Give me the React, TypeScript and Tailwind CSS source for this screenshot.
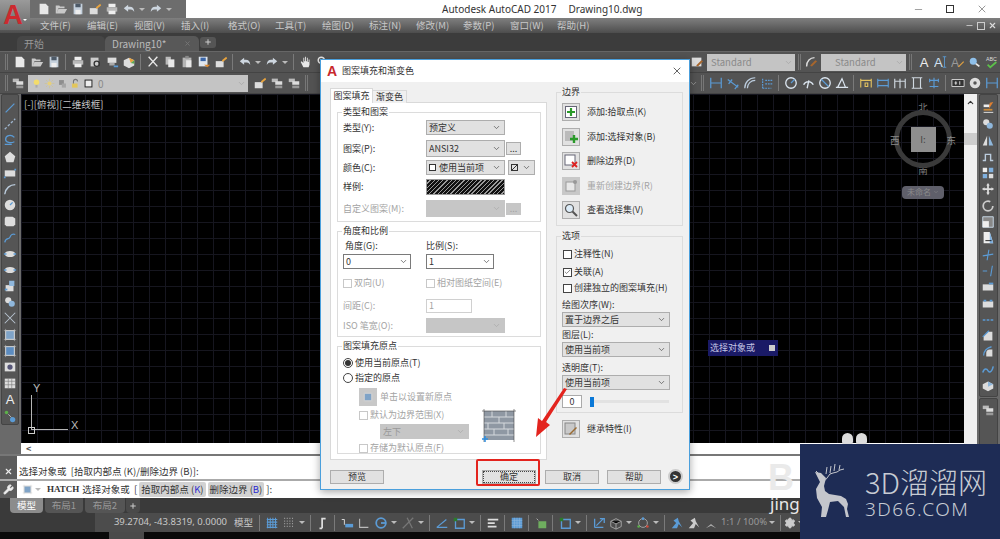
import type { ReactNode } from "react";
import { ChevronDown, Check, Minus, X, Plus, Settings, Wrench } from "lucide-react";

const W = "#e8e8e8";
const B = "#5b9bd5";
const L = "#9fb6cf";

// 16x16 toolbar drawings, named after the AutoCAD command they stand for
const G: Record<string, ReactNode> = {
  newf: <path d="M3 2h7l3 3v9H3z" fill={W} />,
  open: <path d="M2 4h4l1 1h5v2H5l-2 6H2zM5 8h10l-3 5H3z" fill="#c9c9c9" />,
  save: <g><path d="M3 2h10v12H3z" fill="#c4d0dc" /><path d="M5 2h6v4H5z" fill="#4d5a68" /><path d="M5 9h6v5H5z" fill="#eee" /></g>,
  print: <g><path d="M4 2h8v4H4z" fill="#eee" /><path d="M2 6h12v5H2z" fill="#b9b9b9" /><path d="M4 10h8v4H4z" fill="#eee" /></g>,
  preview: <g><path d="M3 3h9v10H3z" fill="#ccc" /><circle cx="10" cy="10" r="3" fill="none" stroke="#333" strokeWidth="1.5" /></g>,
  plot: <g><path d="M3 3h10v6H3z" fill="#ddd" /><path d="M5 9h6v3H5z" fill="#aaa" /><path d="M10 13h5" stroke={B} strokeWidth="2" /></g>,
  cube: <g><path d="M2 6l6-3 6 3v6l-6 3-6-3z" fill="#ddd" /><path d="M8 3l6 3-4 3z" fill="#e8a33d" /><path d="M10 9l4-3v4z" fill="#5aa84f" /></g>,
  cut: <path d="M3 2l10 11M13 2L3 13" stroke={W} strokeWidth="1.6" fill="none" />,
  copy: <g><path d="M3 2h6v9H3z" fill="#bbb" /><path d="M6 5h7v9H6z" fill={W} /></g>,
  paste: <g><path d="M3 3h10v11H3z" fill="#b5b5b5" /><path d="M7 6h6v8H7z" fill={W} /><path d="M6 1h4v3H6z" fill="#888" /></g>,
  blockw: <g><path d="M2 2h10v11H2z" fill="#dfe6ee" /><path d="M4 3h6v4H4z" fill="#3b66a8" /><path d="M8 11h7l-3 3z" fill="#e08a2e" /></g>,
  match: <g><path d="M2 7h9v7H2z" fill="#ddd" /><path d="M9 6l5-4 1 2-5 4z" fill="#e8a33d" /></g>,
  undo: <path d="M7 3L2 7l5 4V8.500h3c2 0 3 1 4 3 0-4-2-6-5-6H7z" fill="#cdd6df" />,
  redo: <path d="M9 3l5 4-5 4V8.500H6c-2 0-3 1-4 3 0-4 2-6 5-6h2z" fill="#cdd6df" />,
  hand: <path d="M5 14L2 8l1-1 2 2V3h1v4h1V2h1v5h1V3h1v5h1V5h1v6l-1 3z" fill={W} />,
  zoom: <g><circle cx="6" cy="6" r="3.500" fill="none" stroke={W} strokeWidth="1.600" /><path d="M8.500 8.500l5 5" stroke={W} strokeWidth="2" /></g>,
  layer: <g><path d="M2 3h7v4H2z" fill="#bbb" /><path d="M6 6h8v4H6z" fill="#ddd" /><path d="M6 11h8v3H6z" fill="#999" /></g>,
  bulb: <g><circle cx="8" cy="6" r="4" fill="#f3dc6b" /><path d="M6.500 10h3v4h-3z" fill="#aaa" /></g>,
  sun: <g><circle cx="8" cy="8" r="3" fill="#e6cf7b" /><path d="M8 1v3M8 12v3M1 8h3M12 8h3M3 3l2 2M11 11l2 2M13 3l-2 2M5 11l-2 2" stroke="#cfc38c" /></g>,
  frozen: <g><path d="M3 3h7v7H3z" fill="#8d8d8d" /><path d="M7 8h6v6H7z" fill="#a5a5a5" /></g>,
  lock: <g><path d="M3 8h8v6H3z" fill="#e3c65a" /><path d="M5 8V5a3 3 0 0 1 6 0" fill="none" stroke="#777" strokeWidth="1.500" /></g>,
  sq: <rect x="3" y="3" width="10" height="10" fill="#eee" stroke="#222" strokeWidth="1.400" />,
  style: <g><path d="M2 3h11v10H2z" fill="#ddd" /><path d="M7 12l6-6 2 1-6 6z" fill="#a8662c" /></g>,
  dimstyle: <g><path d="M3 13C3 7 7 3 12 3" fill="none" stroke="#ddd" strokeWidth="1.600" /><path d="M7 12l6-6 2 1-6 6z" fill="#a8662c" /></g>,
  textA: <text x="3" y="14" fontSize="15" fill="#eee" fontFamily="Liberation Sans">A</text>,
  textAI: <g><text x="0" y="14" fontSize="15" fill="#cfe0f0" fontFamily="Liberation Sans">A</text><path d="M12 2v12M10 2h4M10 14h4" stroke={B} /></g>,
  pen: <g><text x="0" y="14" fontSize="14" fill="#999" fontFamily="Liberation Sans">A</text><path d="M8 13l6-6 1 1-6 6z" fill="#e0a040" /></g>,
  find: <g><circle cx="6" cy="7" r="4" fill="#8fc0ea" /><path d="M9 10l4 3" stroke={W} strokeWidth="2" /></g>,
  abc: <g><text x="1" y="7" fontSize="6" fill="#ddd" fontFamily="Liberation Sans">ABC</text><path d="M3 11l3 3 7-6" stroke="#5cc04a" strokeWidth="2" fill="none" /></g>,
  dimlin: <path d="M2 2v12M14 2v12M2 8h12" stroke={B} strokeWidth="1.400" fill="none" />,
  dimali: <path d="M2 4l12 9M3 9l4-5M10 15l4-5" stroke={B} strokeWidth="1.400" fill="none" />,
  dimarc: <path d="M2 14C2 7 7 2 14 2M5 14C5 9 9 5 14 5" stroke="#bcd" strokeWidth="1.400" fill="none" />,
  dimord: <path d="M3 14h10M3 14V3M6 5h8M6 9h8" stroke={B} strokeWidth="1.400" strokeDasharray="2 1" fill="none" />,
  circ: <g><circle cx="8" cy="8" r="6" fill="none" stroke="#dce6f0" strokeWidth="1.500" /><path d="M8 8l4-4" stroke={B} strokeWidth="1.400" /></g>,
  arc3: <path d="M3 10a6 6 0 0 1 11 0M9 5l-2 9" fill="none" stroke="#dce6f0" strokeWidth="1.500" />,
  circ2: <g><circle cx="8" cy="8" r="6" fill="none" stroke="#dce6f0" strokeWidth="1.500" /><path d="M4 4l8 8" stroke={B} strokeWidth="1.400" /></g>,
  ang: <path d="M1 13h14M3 13l5-10 4 10" fill="none" stroke="#dce6f0" strokeWidth="1.400" />,
  qdim: <path d="M2 3v10M14 3v10M2 5h12M7 8h3v4H7z" stroke="#e0c060" strokeWidth="1.300" fill="none" />,
  base: <path d="M2 3v10M14 3v10M2 5h12M2 11h12" stroke={B} strokeWidth="1.300" fill="none" />,
  cont: <path d="M2 3v11M8 3v11M14 3v11M2 6h12" stroke="#cfd8e0" strokeWidth="1.300" fill="none" />,
  adj: <path d="M2 2h12M2 14h12M4 2v12M12 2v12" stroke="#cfd8e0" strokeWidth="1.300" fill="none" />,
  brk: <path d="M8 2v12M3 3v4M13 3v4M3 5h10M3 12h10" stroke={B} strokeWidth="1.300" fill="none" />,
  tol: <g><path d="M1 4h14v8H1z" fill="#333" stroke="#ddd" /><path d="M4 8h3M5.500 6v4M10 6v4" stroke="#eee" /></g>,
  cen: <g><circle cx="8" cy="8" r="6" fill="#ddd" /><circle cx="8" cy="8" r="2" fill="#555" /></g>,
  pline: <path d="M3 13L13 3" stroke={B} strokeWidth="1.500" />,
  xline: <path d="M2 14L14 2M3 13h.1M13 3h.1" stroke={L} strokeWidth="1.500" strokeDasharray="3 2" />,
  ray: <path d="M13 5C9 1 3 3 3 7s6 5 10 3M2 13h8" stroke={B} strokeWidth="1.500" fill="none" />,
  poly: <path d="M8 2l6 5-2 7H4L2 7z" fill="#ddd" />,
  rect: <g><path d="M2 5h12v7H2z" fill="#ddd" /><path d="M1 13h2M13 4h2" stroke={B} strokeWidth="2" /></g>,
  arc: <path d="M2 14C3 7 8 3 14 3" stroke="#bcd" strokeWidth="1.600" fill="none" />,
  circle: <g><circle cx="8" cy="8" r="6" fill="#ddd" /><path d="M8 8l3-3" stroke={B} strokeWidth="1.500" /></g>,
  cloud: <path d="M3 3h8l3 2v7l-2 2H4l-2-2V5z" fill="#ddd" />,
  spline: <path d="M2 13c1-6 5-3 6-6s3-4 6-3" stroke={B} strokeWidth="1.500" fill="none" />,
  ell: <g><ellipse cx="8" cy="8" rx="6" ry="3.500" fill="#ddd" /><path d="M1 8h3M12 8h3" stroke={B} strokeWidth="1.500" /></g>,
  block: <g><path d="M3 7h9v7H3z" fill="#ddd" /><path d="M7 2h6v6H7z" fill="#8fb7dc" /><path d="M2 12h3" stroke={B} strokeWidth="2" /></g>,
  point: <path d="M2 14L14 2M2 2l12 12" stroke="#b8c4d0" strokeWidth="1.200" />,
  hatch: <g><path d="M3 3h10v10H3z" fill="#7fa3c7" stroke="#ddd" /><path d="M1 3h14M1 13h14M3 1v14M13 1v14" stroke="#ccc" strokeWidth=".6" /></g>,
  grad: <g><path d="M3 3h10v10H3z" fill="#5c8cc0" stroke="#ddd" /><path d="M1 3h14M1 13h14M3 1v14M13 1v14" stroke="#ccc" strokeWidth=".6" /></g>,
  region: <g><path d="M2 3h12v10H2z" fill="#ddd" /><circle cx="8" cy="8" r="3" fill="#557" /></g>,
  table: <g><path d="M2 3h12v11H2z" fill="#ddd" /><path d="M2 6h12M2 10h12M6 3v11M10 3v11" stroke="#777" strokeWidth=".7" /></g>,
  mtext: <text x="3" y="14" fontSize="15" fill="#eee" fontFamily="Liberation Sans">A</text>,
  addsel: <g><circle cx="4" cy="4" r="2" fill="#5cb04a" /><path d="M6 6l4 4" stroke="#bbb" /><circle cx="11" cy="12" r="3" fill={B} /></g>,
  erase: <g><path d="M3 4h7v3H3z" fill="#eee" /><path d="M3 9h10v2H3z" fill="#c8893a" /><path d="M3 13h11" stroke="#eee" /><path d="M10 2l4-1-5 8z" fill="#e08030" /></g>,
  cpy: <g><circle cx="6" cy="6" r="3.500" fill="#ddd" /><circle cx="10" cy="10" r="3.500" fill="#8fb7dc" /></g>,
  mirror: <g><path d="M7 2L2 13h5z" fill="#ddd" /><path d="M9 2l5 11H9z" fill="#8fb7dc" /></g>,
  offset: <path d="M2 12h3V5h6v7h3" fill="none" stroke="#bcd" strokeWidth="1.600" />,
  array: <g><path d="M2 2h5v5H2z" fill="#eee" /><path d="M9 2h5v5H9zM2 9h5v5H2z" fill="#7fb0df" /><path d="M9 9h5v5H9z" fill="#ddd" /></g>,
  move: <path d="M8 1l2 3H9v3h3V6l3 2-3 2V9H9v3h1l-2 3-2-3h1V9H4v1L1 8l3-2v1h3V4H6z" fill="#ddd" />,
  rotate: <circle cx="8" cy="8" r="5.500" fill="none" stroke="#ccc" strokeWidth="2" strokeDasharray="28 6" />,
  scale: <g><path d="M2 2h12v12H2z" fill="#888" stroke="#cfe0f0" /><path d="M2 7h7v7H2z" fill="#eee" /></g>,
  stretch: <g><path d="M3 1h7l4 13H3z" fill="#eee" /><path d="M10 1l4 13h-4z" fill="#7fb0df" /><path d="M5 11h7" stroke="#111" /></g>,
  trim: <path d="M2 9l12-2M9 2L7 14" stroke={B} strokeWidth="1.300" />,
  ext: <path d="M2 8h5M13 2l-2 12" stroke={B} strokeWidth="1.300" />,
  brkp: <g><path d="M2 5h12v7H2z" fill="#ddd" /><path d="M9 4h5" stroke={B} strokeWidth="2" /></g>,
  brk2: <g><path d="M2 5h12v7H2z" fill="#ddd" /><path d="M3 4h3M10 4h3" stroke={B} strokeWidth="2" /></g>,
  join: <path d="M2 8h12" stroke={B} strokeWidth="1.500" strokeDasharray="3 1.500" />,
  chamfer: <g><path d="M3 13V8l5-5h5v10z" fill="#ddd" /><path d="M2 9l7-7" stroke={B} strokeWidth="1.500" /></g>,
  fillet: <g><path d="M6 13V9a4 4 0 0 1 4-4h3v8z" fill="#ddd" /><path d="M3 12C3 7 7 3 12 2" stroke={B} strokeWidth="1.500" fill="none" /></g>,
  blend: <path d="M2 12c2-6 5-4 6-2s4 3 6-5" stroke={B} strokeWidth="1.800" fill="none" />,
  explode: <g><path d="M2 7l6-3 6 3v5l-6 3-6-3z" fill="#ddd" /><path d="M8 4l6 3-6 3z" fill="#8fb7dc" /></g>,
  grid: <path d="M3 2v12M6 2v12M9 2v12M12 2v12M2 4h12M2 7h12M2 10h12M2 13h12" stroke={B} strokeWidth="1.200" />,
  grid2: <path d="M3 2v12M6 2v12M9 2v12M12 2v12" stroke="#999" strokeWidth="1.200" strokeDasharray="1.500 1.500" />,
  note: <path d="M7 14V3h4M4 14h3" stroke="#ddd" strokeWidth="2" fill="none" />,
  ortho: <path d="M3 3v10h10" stroke="#bbb" strokeWidth="1.200" fill="none" />,
  dyn: <g><path d="M2 4h3v6" stroke={W} fill="none" /><path d="M6 9h9v4H6z" fill={B} /></g>,
  polar: <g><circle cx="8" cy="8" r="5.500" fill="none" stroke={B} strokeWidth="2" /><path d="M8 8h6" stroke={B} strokeWidth="2" /></g>,
  iso: <path d="M2 14L14 2M7 2l6 12" stroke="#777" strokeWidth="1.500" />,
  snap: <g><path d="M2 13L13 4M2 13h12" stroke={B} strokeWidth="1.400" /></g>,
  osnap: <g><path d="M4 4h10v10H4z" fill="none" stroke={B} strokeWidth="1.500" /><path d="M2 2h4v4H2z" fill="#2c7a2c" /></g>,
  lw: <path d="M2 4h12M2 8h8M2 12h10" stroke="#ddd" strokeWidth="2" />,
  trans: <g><path d="M2 2h12v12H2z" fill={B} /><path d="M2 5h12M2 8h12M2 11h12M5 2v12M8 2v12M11 2v12" stroke="#8fb7dc" strokeWidth=".7" /></g>,
  sel: <g><path d="M3 3l2 2" stroke="#bbb" /><path d="M5 6h9v8H5z" fill="#6fae5f" /></g>,
  cube3: <g><path d="M2 6l6-3 6 3v6l-6 3-6-3z" fill="none" stroke="#aaa" /><path d="M2 6l6 3 6-3M8 9v6" stroke="#aaa" /></g>,
  ucs: <path d="M3 13V3M3 13h10M5 11l8-8M9 3h5v5" stroke={B} strokeWidth="1.500" fill="none" />,
  gizmo: <g><circle cx="8" cy="8" r="5" fill="none" stroke="#aaa" /><circle cx="3" cy="12" r="1.500" fill="#5cb04a" /><circle cx="13" cy="12" r="1.500" fill="#d04a3a" /><circle cx="8" cy="3" r="1.500" fill={B} /></g>,
  anno: <path d="M2 14l5-6-3-3 5-3 1 4 4 7-4-4-2 5z" fill={B} />,
  anno2: <path d="M2 14l5-6-3-3 5-3 1 4 4 7-4-4-2 5z" fill="#ccc" />,
  anno3: <path d="M8 2v7l6 5-6-3-6 3 6-5z" fill="#aaa" />,
};

function Ic({ n, s = 14 }: { n: string; s?: number }) {
  return (
    <svg width={s} height={s} viewBox="0 0 16 16" className="shrink-0">
      {G[n]}
    </svg>
  );
}

const Caret = () => <span className="mx-[2px] h-0 w-0 border-x-[3px] border-t-[3px] border-x-transparent border-t-[#bbb]" />;
const Sep = () => <span className="mx-[3px] h-[16px] w-px bg-[#7a7a7a]" />;
const Grip = () => <span className="mx-[3px] h-[16px] w-[3px] border-x border-[#777]" />;

function ToolSelect({ text, w, muted }: { text: string; w: string; muted?: boolean }) {
  return (
    <div className={`flex h-[17px] items-center justify-between bg-[#c4c4c4] pl-[4px] pr-[2px] text-[9.500px] text-[#8a8a8a] ${w}`}>
      <span className={muted ? "ml-[10px]" : ""}>{text}</span>
      <ChevronDown size={9} color="#a5a5a5" />
    </div>
  );
}

function DSelect({ text, w, off, h = "h-[15px]" }: { text?: ReactNode; w: string; off?: boolean; h?: string }) {
  return (
    <div className={`flex items-center justify-between border border-[#adadad] pl-[2px] pr-[3px] ${h} ${w} ${off ? "bg-[#c6c6c6] text-[#999] border-[#c6c6c6]" : "bg-[#e1e1e1] text-[#333]"}`}>
      <span className="truncate">{text}</span>
      <ChevronDown size={9} color={off ? "#aaa" : "#555"} />
    </div>
  );
}

function WhiteCombo({ text, w }: { text: string; w: string }) {
  return (
    <div className={`flex h-[15px] items-center justify-between border border-[#7a7a7a] bg-white pl-[2px] pr-[2px] text-[#333] ${w}`}>
      <span>{text}</span>
      <ChevronDown size={9} color="#555" />
    </div>
  );
}

function Cb({ label, on, off }: { label: string; on?: boolean; off?: boolean }) {
  return (
    <div className={`flex items-center gap-[2px] ${off ? "text-[#a3a3a3]" : "text-[#333]"}`}>
      <span className={`flex h-[9px] w-[9px] items-center justify-center border bg-white ${off ? "border-[#c8c8c8]" : "border-[#444]"}`}>
        {on && <Check size={8} color="#333" strokeWidth={2} />}
      </span>
      {label}
    </div>
  );
}

function Radio({ label, on }: { label: string; on?: boolean }) {
  return (
    <div className="flex items-center gap-[2px] text-[#333]">
      <span className="flex h-[10px] w-[10px] items-center justify-center rounded-full border border-[#444] bg-white">
        {on && <span className="h-[6px] w-[6px] rounded-full bg-[#333]" />}
      </span>
      {label}
    </div>
  );
}

function Group({ title, bg, h, children }: { title: string; bg: string; h: string; children: ReactNode }) {
  return (
    <div className={`relative border border-[#dcdcdc] ${h}`}>
      <span className={`absolute -top-[7px] left-[4px] px-[1px] leading-[12px] text-[#333] ${bg}`}>{title}</span>
      {children}
    </div>
  );
}

function SideBtn({ label, off, children }: { label: string; off?: boolean; children: ReactNode }) {
  return (
    <div className={`flex h-[18px] items-center gap-[7px] ${off ? "text-[#a3a3a3]" : "text-[#333]"}`}>
      <span className={`flex h-[18px] w-[18px] items-center justify-center border ${off ? "border-[#c8c8c8] bg-[#c8c8c8]" : "border-[#adadad] bg-[#e1e1e1]"}`}>{children}</span>
      {label}
    </div>
  );
}

function DBtn({ text, cls = "" }: { text: string; cls?: string }) {
  return <div className={`flex h-[14px] w-[54px] items-center justify-center border border-[#adadad] bg-[#e1e1e1] text-[#333] ${cls}`}>{text}</div>;
}

const hatchBg = "bg-[repeating-linear-gradient(135deg,#111_0px,#111_2px,#9a9a9a_2px,#9a9a9a_3px)]";

function HatchDialog() {
  return (
    <div className="absolute left-[320px] top-[59px] z-10 flex h-[431px] w-[370px] flex-col border border-[#4a9fdc] bg-[#f0f0f0] text-[9px] leading-[12px] shadow-[0_2px_8px_rgba(0,0,0,0.35)]">
      <div className="flex h-[22px] shrink-0 items-center bg-white pl-[6px] pr-[6px]">
        <span className="w-[15px] text-[14px] font-bold text-[#c8282d] [font-family:'Liberation_Sans',sans-serif]">A</span>
        <span className="text-[#333]">图案填充和渐变色</span>
        <X size={12} color="#333" className="ml-auto" strokeWidth={1.5} />
      </div>
      <div className="flex pl-[9px] pt-[6px]">
        <div className="w-[217px]">
          <div className="relative z-[1] flex h-[15px] items-end">
            <div className="flex h-[15px] w-[43px] items-center justify-center border border-b-0 border-[#d9d9d9] bg-white text-[#333]">图案填充</div>
            <div className="flex h-[13px] w-[34px] items-center justify-center border border-b-0 border-l-0 border-[#d9d9d9] bg-[#f0f0f0] text-[#333]">渐变色</div>
          </div>
          <div className="-mt-px flex h-[358px] flex-col gap-[9px] border border-[#d9d9d9] bg-white pl-[6px] pr-[5px] pt-[9px]">
            <Group title="类型和图案" bg="bg-white" h="h-[110px]">
              <div className="flex flex-col pl-[5px] pt-[7px]">
                <div className="flex h-[15px] items-center text-[#333]"><span className="w-[83px]">类型(Y):</span><DSelect text="预定义" w="w-[79px]" /></div>
                <div className="mt-[5px] flex h-[17px] items-center text-[#333]"><span className="w-[83px]">图案(P):</span><DSelect text="ANSI32" w="w-[79px]" h="h-[17px]" /><span className="ml-px flex h-[13px] w-[15px] items-center justify-center border border-[#adadad] bg-[#e1e1e1]">...</span></div>
                <div className="mt-[3px] flex h-[15px] items-center text-[#333]">
                  <span className="w-[83px]">颜色(C):</span>
                  <DSelect w="w-[79px]" text={<span className="flex items-center gap-[3px]"><span className="h-[7px] w-[7px] border border-[#333] bg-white" />使用当前项</span>} />
                  <DSelect w="ml-[3px] w-[27px]" text={<span className="block h-[7px] w-[7px] border border-[#333] bg-[linear-gradient(135deg,transparent_45%,#333_45%,#333_55%,transparent_55%)]" />} />
                </div>
                <div className="mt-[4px] flex h-[16px] items-center text-[#333]"><span className="w-[83px]">样例:</span><div className={`h-[16px] w-[79px] border border-[#999] ${hatchBg}`} /></div>
                <div className="mt-[5px] flex h-[17px] items-center text-[#a3a3a3]"><span className="w-[83px]">自定义图案(M):</span><DSelect w="w-[79px]" off h="h-[17px]" /><span className="ml-px flex h-[12px] w-[15px] items-center justify-center bg-[#c6c6c6]">...</span></div>
              </div>
            </Group>
            <Group title="角度和比例" bg="bg-white" h="h-[106px]">
              <div className="flex flex-col pl-[5px] pt-[8px]">
                <div className="flex text-[#333]"><span className="w-[83px] pl-[2px]">角度(G):</span><span>比例(S):</span></div>
                <div className="mt-[2px] flex"><WhiteCombo text="0" w="mr-[15px] w-[68px]" /><WhiteCombo text="1" w="w-[68px]" /></div>
                <div className="mt-[8px] flex"><div className="w-[83px]"><Cb label="双向(U)" off /></div><Cb label="相对图纸空间(E)" off /></div>
                <div className="mt-[9px] flex h-[15px] items-center text-[#a3a3a3]"><span className="w-[83px]">间距(C):</span><span className="flex h-[14px] w-[46px] items-center border border-[#d0d0d0] bg-white pl-[2px]">1</span></div>
                <div className="mt-[5px] flex h-[15px] items-center text-[#a3a3a3]"><span className="w-[83px]">ISO 笔宽(O):</span><DSelect w="w-[79px]" off /></div>
              </div>
            </Group>
            <Group title="图案填充原点" bg="bg-white" h="h-[108px]">
              <div className="flex">
                <div className="flex flex-col pl-[5px] pt-[10px]">
                  <Radio label="使用当前原点(T)" on />
                  <div className="mt-[3px]"><Radio label="指定的原点" /></div>
                  <div className="ml-[16px] mt-[4px] flex items-center gap-[3px] text-[#a3a3a3]">
                    <span className="flex h-[18px] w-[18px] items-center justify-center bg-[#c8c8c8]"><Ic n="hatch" s={12} /></span>单击以设置新原点
                  </div>
                  <div className="ml-[16px] mt-[3px]"><Cb label="默认为边界范围(X)" off /></div>
                  <div className="ml-[37px] mt-[3px]"><DSelect text="左下" w="w-[89px]" off /></div>
                  <div className="ml-[16px] mt-[3px]"><Cb label="存储为默认原点(F)" off /></div>
                </div>
                <svg width="34" height="33" viewBox="0 0 34 33" className="ml-[13px] mt-[62px] shrink-0">
                  <rect x="2" y="2" width="30" height="29" fill="#8f98a3" />
                  <path d="M2 8h30M2 14h30M2 20h30M2 26h30M10 2v6M24 2v6M17 8v6M6 14v6M22 14v6M12 20v6M26 20v6" stroke="#d5d9dd" />
                  <path d="M0 2h34M2 0v33M32 0v33" stroke="#444" strokeWidth=".6" />
                  <path d="M0 30h6M3 27v6" stroke="#2f8fe0" strokeWidth="1.500" />
                </svg>
              </div>
            </Group>
          </div>
        </div>
        <div className="ml-[9px] flex w-[127px] flex-col pt-[4px]">
          <Group title="边界" bg="bg-[#f0f0f0]" h="h-[134px]">
            <div className="flex flex-col gap-[6.500px] pl-[5px] pt-[10px]">
              <SideBtn label="添加:拾取点(K)"><svg width="12" height="12" viewBox="0 0 12 12"><rect x=".5" y=".5" width="11" height="11" fill="#fff" stroke="#667" /><path d="M6 2v8M2 6h8" stroke="#2a9a2a" strokeWidth="2.200" /></svg></SideBtn>
              <SideBtn label="添加:选择对象(B)"><svg width="14" height="14" viewBox="0 0 14 14"><rect x="1" y="1" width="9" height="10" fill="#bbb" /><path d="M10 5v8M6 9h8" stroke="#2a9a2a" strokeWidth="2.400" /></svg></SideBtn>
              <SideBtn label="删除边界(D)"><svg width="14" height="14" viewBox="0 0 14 14"><rect x="1" y="1" width="10" height="10" fill="#fff" stroke="#667" /><path d="M8 8l5 5M13 8l-5 5" stroke="#d22" strokeWidth="1.800" /></svg></SideBtn>
              <SideBtn label="重新创建边界(R)" off><svg width="14" height="14" viewBox="0 0 14 14"><rect x="2" y="3" width="9" height="9" fill="#e8e8e8" stroke="#999" /><circle cx="11" cy="3" r="2" fill="#999" /></svg></SideBtn>
              <SideBtn label="查看选择集(V)"><svg width="14" height="14" viewBox="0 0 14 14"><circle cx="5.500" cy="5.500" r="4" fill="#dcecf8" stroke="#555" strokeWidth="1.200" /><path d="M8.500 8.500l4.500 4.500" stroke="#555" strokeWidth="2" /></svg></SideBtn>
            </div>
          </Group>
          <div className="mt-[10px]">
            <Group title="选项" bg="bg-[#f0f0f0]" h="h-[177px]">
              <div className="flex flex-col pl-[6px] pt-[11px]">
                <Cb label="注释性(N)" />
                <div className="mt-[6px]"><Cb label="关联(A)" on /></div>
                <div className="mt-[4px]"><Cb label="创建独立的图案填充(H)" /></div>
                <span className="-ml-px mt-[5px] text-[#333]">绘图次序(W):</span>
                <DSelect text="置于边界之后" w="-ml-px mt-[1px] w-[108px]" />
                <span className="-ml-px mt-[2px] text-[#333]">图层(L):</span>
                <DSelect text="使用当前项" w="-ml-px mt-[1px] w-[108px]" />
                <span className="-ml-px mt-[5px] text-[#333]">透明度(T):</span>
                <DSelect text="使用当前项" w="-ml-px mt-[1px] w-[108px]" />
                <div className="-ml-px mt-[5px] flex items-center">
                  <span className="flex h-[13px] w-[20px] items-center justify-center border border-[#aaa] bg-white text-[#333]">0</span>
                  <div className="ml-[8px] flex h-[3px] w-[79px] items-center bg-[#e2e2e2]"><span className="h-[10px] w-[4px] bg-[#0a78d7]" /></div>
                </div>
              </div>
            </Group>
          </div>
          <div className="ml-[6px] mt-[7px]">
            <SideBtn label="继承特性(I)"><svg width="14" height="14" viewBox="0 0 14 14"><rect x="1" y="1" width="10" height="11" fill="#c9c9c9" stroke="#888" /><path d="M5 12l7-7 1 1-7 7z" fill="#9a6a30" /></svg></SideBtn>
          </div>
        </div>
      </div>
      <div className="ml-[9px] mt-[9px] flex items-center">
        <DBtn text="预览" />
        <DBtn text="确定" cls="ml-[98px] border-[#0078d7] outline-1 -outline-offset-2 outline-dotted outline-[#444]" />
        <DBtn text="取消" cls="ml-[9px]" />
        <DBtn text="帮助" cls="ml-[8px]" />
        <span className="ml-[7px] flex h-[15px] w-[15px] items-center justify-center rounded-full border-2 border-[#ccc] bg-[#333] text-[9px] font-bold text-white [font-family:'Liberation_Sans',sans-serif]">&gt;</span>
      </div>
    </div>
  );
}

const topIcons = ["newf", "open", "save", "|", "print", "preview", "plot", "cube", "|", "cut", "copy", "paste", "blockw", "match", "|", "undo", "^", "redo", "^", "|", "hand", "zoom"];
const dimIcons = ["dimlin", "dimali", "dimarc", "dimord", "|", "circ", "arc3", "circ2", "ang", "|", "qdim", "base", "cont", "adj", "brk", "|", "tol", "cen", "dimlin"];
const leftTools = ["pline", "xline", "ray", "poly", "rect", "arc", "circle", "cloud", "spline", "ell", "ell", "block", "cpy", "point", "hatch", "grad", "region", "table", "mtext", "addsel"];
const rightTools = ["erase", "cpy", "mirror", "offset", "array", "move", "rotate", "scale", "stretch", "trim", "ext", "brkp", "brk2", "join", "chamfer", "fillet", "blend", "explode"];
const menus = ["文件(F)", "编辑(E)", "视图(V)", "插入(I)", "格式(O)", "工具(T)", "绘图(D)", "标注(N)", "修改(M)", "参数(P)", "窗口(W)", "帮助(H)"];
const statusIcons = ["iso", "^", "|", "snap", "osnap", "^", "|", "lw", "|", "trans", "|", "sel", "|", "osnap", "^", "|", "ucs", "cube3", "^", "gizmo", "^", "|", "anno", "anno2", "anno3"];

function Strip({ items }: { items: string[] }) {
  return (
    <>
      {items.map((n, i) =>
        n === "|" ? <Sep key={i} /> : n === "^" ? <Caret key={i} /> : <span key={i} className="mx-[1.500px]"><Ic n={n} /></span>
      )}
    </>
  );
}

function ViewCube() {
  return (
    <div className="absolute left-[893px] top-[100px] flex w-[60px] flex-col items-center text-[9.500px] text-[#7c7c7c]">
      <span>北</span>
      <div className="relative mt-[-4px] flex h-[58px] w-[58px] items-center justify-center rounded-full border-[5px] border-[#3a3a3a]">
        <div className="flex h-[25px] w-[25px] items-center justify-center bg-[#8e8e8e] text-[#444]">I:</div>
        <span className="absolute -left-[9px] top-[18px] text-[#8a8a8a]">西</span>
        <span className="absolute -right-[9px] top-[18px] text-[#8a8a8a]">东</span>
      </div>
      <span className="mt-[-5px]">南</span>
      <div className="mt-[8px] flex h-[13px] w-[42px] items-center justify-center gap-[2px] rounded-[4px] bg-[#5f5f6a] text-[8px] text-[#8a8a8a]">未命名<ChevronDown size={6} /></div>
    </div>
  );
}

export default function App() {
  return (
    <div className="relative flex h-[539px] w-[1000px] flex-col overflow-hidden bg-black text-[10px] [font-family:'Noto_Sans_CJK_SC','Noto_Sans',sans-serif]">
      {/* title bar */}
      <div className="flex h-[18px] shrink-0 bg-white">
        <div className="z-[2] flex h-[30px] w-[30px] shrink-0 items-center justify-center bg-[linear-gradient(#9a9a9a,#6a6a6a)]">
          <span className="text-[27px] font-bold leading-none text-[#cc2a2f] [font-family:'Liberation_Sans',sans-serif]">A</span>
          <span className="mt-[10px] h-0 w-0 border-x-[2px] border-t-[2px] border-x-transparent border-t-white" />
        </div>
        <div className="flex w-[156px] items-center bg-[#6d6d6d] pl-[5px]">
          <Strip items={["newf", "open", "save", "match", "print", "undo", "^", "redo", "^"]} />
        </div>
        <div className="flex flex-1 items-center pl-[256px] text-[#333] [font-family:'Noto_Sans',sans-serif]">
          <span>Autodesk AutoCAD 2017</span>
          <span className="ml-[12px]">Drawing10.dwg</span>
          <div className="ml-auto mr-[12px] flex items-center gap-[22px]">
            <Minus size={11} strokeWidth={1} color="#333" />
            <span className="h-[8px] w-[8px] border border-[#333]" />
            <X size={12} strokeWidth={1} color="#333" />
          </div>
        </div>
      </div>
      {/* menu bar */}
      <div className="flex h-[15px] shrink-0 items-center bg-[linear-gradient(#7f7f7f,#4d4d4d)] pl-[40px] text-[9.500px] text-[#c8c8c8]">
        {menus.map((m) => <span key={m} className="w-[47px] shrink-0">{m}</span>)}
        <div className="ml-auto mr-[3px] flex items-center gap-[3px] text-[#ddd]">
          <Minus size={9} /><span className="h-[8px] w-[8px] border border-[#ccc]" /><X size={9} strokeWidth={3} />
        </div>
      </div>
      {/* file tabs */}
      <div className="flex h-[18px] shrink-0 items-end bg-[#3c3c3c] pl-[17px] text-[#999]">
        <div className="flex h-[15px] w-[88px] items-center rounded-t-[5px] bg-[#464646] pl-[7px]">开始</div>
        <div className="flex h-[15px] w-[94px] items-center justify-between rounded-t-[5px] bg-[#585858] pl-[7px] pr-[8px] text-[#bbb]">Drawing10*<X size={7} color="#777" strokeWidth={3} /></div>
        <div className="ml-[1px] flex h-[11px] w-[16px] items-center justify-center self-center rounded-[3px] bg-[#555]"><Plus size={8} color="#ccc" strokeWidth={3} /></div>
      </div>
      {/* toolbars */}
      <div className="flex h-[21px] shrink-0 items-center border-t border-[#666] bg-[#535353] pl-[2px]">
        <Grip />
        <Strip items={topIcons} />
        <div className="ml-auto flex items-center">
          <Ic n="style" />
          <span className="w-[3px]" />
          <ToolSelect text="Standard" w="w-[88px]" />
          <Grip />
          <Ic n="dimstyle" />
          <span className="w-[3px]" />
          <ToolSelect text="Standard" w="w-[85px]" muted />
          <Grip />
          <Strip items={["textA", "textAI", "pen", "find", "abc"]} />
        </div>
      </div>
      <div className="flex h-[22px] shrink-0 items-center border-y border-[#444] bg-[#535353] pl-[2px]">
        <Grip />
        <Ic n="layer" />
        <div className="ml-[3px] flex h-[17px] w-[220px] items-center gap-[2px] bg-[#c4c4c4] pl-[3px] pr-[2px] text-[#8a8a8a]">
          <Ic n="bulb" s={11} /><Ic n="sun" s={11} /><Ic n="frozen" s={11} /><Ic n="lock" s={11} /><Ic n="sq" s={11} />
          <span className="ml-[2px]">0</span>
          <ChevronDown size={9} color="#a5a5a5" className="ml-auto" />
        </div>
        <span className="ml-[3px]" />
        <Strip items={["match", "layer", "layer"]} />
        <Grip />
        <div className="ml-auto flex items-center">
          <ChevronDown size={9} color="#a5a5a5" />
          <Grip />
          <Strip items={dimIcons} />
        </div>
      </div>
      {/* middle: tool strips and canvas */}
      <div className="flex min-h-0 flex-1">
        <div className="flex w-[21px] shrink-0 flex-col bg-[#6a6a6a] pl-[1px]">
          <div className="flex h-[331px] w-[18px] flex-col items-center gap-[2.200px] rounded-[2px] border border-[#444] bg-[#555] pt-[6px]">
            {leftTools.map((n, i) => <Ic key={i} n={n} />)}
          </div>
        </div>
        <div className="flex min-w-0 flex-1 flex-col">
          <div className="relative flex-1 bg-black bg-[linear-gradient(#16161f_1px,transparent_1px),linear-gradient(90deg,#16161f_1px,transparent_1px)] bg-[size:16px_16px] pl-[3px] pt-[3px] text-[9.500px] text-[#c4c4c4]">
            [-][俯视][二维线框]
          </div>
          <div className="flex h-[11px] items-center bg-white pl-[5px] text-[9px] font-bold leading-none text-[#555]">&lt;</div>
        </div>
        <div className="flex w-[13px] shrink-0 flex-col items-center bg-[#f0f0f0] pt-[4px]">
          <ChevronDown size={9} color="#333" strokeWidth={3} className="rotate-180" />
          <div className="mt-[26px] h-[12px] w-full bg-[#cdcdcd]" />
          <ChevronDown size={9} color="#333" strokeWidth={3} className="mt-auto mb-[1px]" />
        </div>
        <div className="flex w-[23px] shrink-0 flex-col items-center bg-[#6a6a6a] pr-[1px]">
          <div className="flex w-[19px] flex-col items-center gap-[2.300px] rounded-[2px] border border-[#444] bg-[#555] pb-[4px] pt-[6px]">
            {rightTools.map((n, i) => <Ic key={i} n={n} />)}
          </div>
          <div className="mt-[1px] flex w-[19px] flex-1 justify-center rounded-[2px] border border-[#444] bg-[#555] pt-[4px]"><Ic n="layer" /></div>
        </div>
      </div>
      {/* command line */}
      <div className="flex h-[44px] shrink-0 flex-col border-t-2 border-[#777] bg-white">
        <div className="flex h-[25px] border-b-2 border-[#aaa]">
          <div className="flex w-[17px] shrink-0 flex-col items-center bg-[#5c5c5c] pt-[11px]"><X size={9} color="#eee" strokeWidth={3} /></div>
          <span className="self-end pb-[1px] pl-[2px] text-[9.500px] leading-[13px] text-[#333]">选择对象或 &nbsp;[拾取内部点 (K)/删除边界 (B)]:</span>
        </div>
        <div className="flex h-[17px] items-center">
          <div className="flex h-full w-[17px] shrink-0 items-center justify-center bg-[#5c5c5c]"><Wrench size={11} color="#eee" fill="#eee" /></div>
          <span className="ml-[5px]"><Ic n="hatch" s={11} /></span>
          <Caret />
          <span className="ml-[4px] text-[9px] font-bold text-[#333] [font-family:'Liberation_Serif',serif]">HATCH</span>
          <span className="ml-[3px] text-[9.500px] text-[#333]">选择对象或 &nbsp;[</span>
          <span className="ml-[2px] rounded-[2px] bg-[#d2d2d2] px-[2px] text-[9.500px] text-[#333]">拾取内部点 (<span className="text-[#2a2ad0]">K</span>)</span>
          <span className="ml-[2px] rounded-[2px] bg-[#d2d2d2] px-[2px] text-[9.500px] text-[#333]">删除边界 (<span className="text-[#2a2ad0]">B</span>)</span>
          <span className="ml-[2px] text-[9.500px] text-[#333]">]:</span>
        </div>
      </div>
      {/* layout tabs */}
      <div className="flex h-[15px] shrink-0 items-end bg-[#3a3a3a] pl-[10px] text-[9.500px]">
        <div className="flex h-[15px] w-[33px] items-center justify-center rounded-b-[4px] bg-[#8c8c8c] text-white">模型</div>
        <div className="ml-[2px] flex h-[15px] w-[38px] items-center justify-center rounded-b-[4px] bg-[#555] text-[#999]">布局1</div>
        <div className="ml-[2px] flex h-[15px] w-[40px] items-center justify-center rounded-b-[4px] bg-[#555] text-[#999]">布局2</div>
        <div className="ml-[1px] flex h-[15px] w-[14px] items-center justify-center rounded-b-[4px] bg-[#4a4a4a]"><Plus size={8} color="#ccc" strokeWidth={3} /></div>
      </div>
      {/* status bar */}
      <div className="flex h-[19px] shrink-0 items-center bg-[#3a3a3a] pl-[95px]">
        <div className="flex h-[19px] items-center bg-[#4c4c4c] text-[#c8c8c8]">
          <span className="w-[134px] pr-[2px] text-right text-[9.500px] [font-family:'Noto_Sans',sans-serif]">39.2704, -43.8319, 0.0000</span>
          <span className="ml-[2px] px-[3px] text-[9.500px]">模型</span>
          <Sep />
          <Strip items={["grid", "grid2", "^", "|", "note", "|", "dyn", "ortho", "polar", "^"]} />
          <Strip items={statusIcons} />
          <span className="ml-[2px] text-[#999] [font-family:'Noto_Sans',sans-serif] text-[9.500px]">1:1 / 100%</span>
          <Caret />
          <Sep />
          <Settings size={12} color="#ccc" fill="#ccc" />
          <Caret />
          <Sep />
          <Plus size={12} color="#ccc" />
          <Sep />
          <span className="mx-[5px] h-[10px] w-[3px] bg-[#aaa]" />
        </div>
      </div>
      <div className="h-[7px] shrink-0 bg-[#0a0a0a] pl-[109px]"><div className="h-full w-[35px] bg-[#4a4a4a]" /></div>

      {/* everything below floats over the workspace */}
      <ViewCube />
      <div className="absolute left-[31px] top-[395px] h-[35px] w-[37px] border-b border-l border-[#b5b5b5]" />
      <span className="absolute left-[28px] top-[427px] h-[7px] w-[7px] border border-[#ccc]" />
      <span className="absolute left-[33px] top-[380px] text-[11px] text-[#bbb] [font-family:'Liberation_Sans',sans-serif]">Y</span>
      <span className="absolute left-[71px] top-[417px] text-[11px] text-[#bbb] [font-family:'Liberation_Sans',sans-serif]">X</span>
      <div className="absolute left-[708px] top-[340px] flex h-[16px] w-[70px] items-center bg-[#1a1a66] pl-[2px] text-[9px] text-[#c4c4e4]">
        选择对象或<span className="ml-auto mr-[3px] h-[6px] w-[6px] bg-[#ccc]" />
      </div>
      <span className="absolute left-[842px] top-[433px] h-[14px] w-[11px] rounded-full bg-[#ddd]" />
      <span className="absolute left-[856px] top-[433px] h-[14px] w-[11px] rounded-full bg-[#ddd]" />
      <span className="absolute left-[768px] top-[456px] text-[36px] font-bold leading-[44px] text-[#eaeaea] [font-family:'Liberation_Sans',sans-serif]">B</span>
      <span className="absolute left-[770px] top-[494px] text-[17px] leading-[20px] text-[#e8e8e8] [font-family:'Noto_Sans',sans-serif]">jing</span>
      <HatchDialog />
      <div className="absolute left-[476px] top-[459px] z-20 h-[27px] w-[64px] rounded-[2px] border-2 border-[#e3241e]" />
      <svg width="40" height="52" viewBox="0 0 40 52" className="absolute left-[533px] top-[387px] z-20">
        <path d="M34 2L13 35l4 3L3 50l2-19 4 3L31 1z" fill="#e3241e" />
      </svg>
      {/* 3D66 watermark */}
      <div className="absolute left-[800px] top-[444px] z-30 flex h-[95px] w-[200px] items-center bg-[#1e2c55]">
        <svg width="46" height="60" viewBox="0 0 46 60" className="ml-[12px] shrink-0">
          <path d="M4 9l3 3 3 6c2 1 3 1 5-2l3-4 3-1 4-1 3-2 4-1M14 12l1-7M18 11l1-7M22 9l1-7M27 8l1-5" fill="none" stroke="#c4c6cc" strokeWidth="1" />
          <path d="M3 10l6 1 5 5-2 8 1 5 4 3 12 2 5 3 2 5-1 5 2 8h-3l-2-10-6-6-8 1-2 8-2 7H9l1-10-5-9-1-9 4-7z" fill="#c4c6cc" />
        </svg>
        <div className="ml-[7px] flex flex-col text-[#c8ccd4]">
          <span className="text-[29px] font-light leading-[32px] [font-family:'Noto_Sans_CJK_SC',sans-serif]">3D溜溜网</span>
          <span className="mt-[2px] text-[19px] font-light leading-[20px] tracking-[1.500px] [font-family:'Noto_Sans',sans-serif]">3D66.COM</span>
        </div>
      </div>
    </div>
  );
}
